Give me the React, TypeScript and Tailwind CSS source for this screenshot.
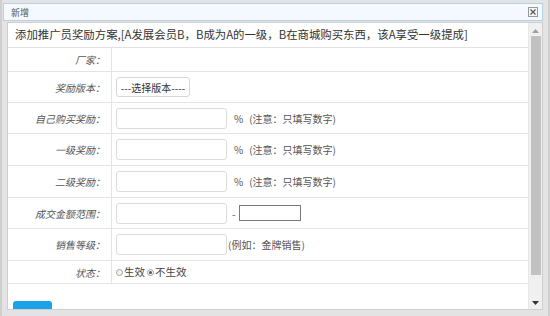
import React from 'react';

// Form rows for the "新增" dialog.
const rows: { label: string; kind: string; h: string }[] = [
  { label: '厂家：', kind: 'empty', h: 'h-[24px]' },
  { label: '奖励版本：', kind: 'select', h: 'h-[31px]' },
  { label: '自己购买奖励：', kind: 'percent', h: 'h-[31px]' },
  { label: '一级奖励：', kind: 'percent', h: 'h-[32px]' },
  { label: '二级奖励：', kind: 'percent', h: 'h-[32px]' },
  { label: '成交金额范围：', kind: 'range', h: 'h-[31px]' },
  { label: '销售等级：', kind: 'level', h: 'h-[32px]' },
  { label: '状态：', kind: 'status', h: 'h-[23px]' },
];

const TextBox = () => (
  <div className="w-[111px] h-[21px] rounded-[3px] border border-[#dcdcdc] bg-white" />
);

const Radio = ({ checked }: { checked?: boolean }) => (
  <span className="inline-flex items-center justify-center w-[7px] h-[7px] rounded-full border border-[#a0a0a0] bg-[#f4f4f4] mr-[1px]">
    {checked && <span className="w-[3px] h-[3px] rounded-full bg-[#555]" />}
  </span>
);

const Cell = ({ kind }: { kind: string }) => {
  if (kind === 'select')
    return (
      <div className="w-[74px] h-[20px] rounded-[3px] border border-[#d6d6d6] bg-white flex items-center justify-center text-[10px] text-[#333]">
        ---选择版本----
      </div>
    );
  if (kind === 'percent')
    return (
      <div className="flex items-center text-[10px] text-[#555]">
        <TextBox />
        <span className="ml-[7px]">%</span>
        <span className="ml-[6px]">(注意：只填写数字)</span>
      </div>
    );
  if (kind === 'range')
    return (
      <div className="flex items-center text-[10px] text-[#555]">
        <TextBox />
        <span className="ml-[5px]">-</span>
        <div className="ml-[4px] w-[62px] h-[16px] border border-[#7a7a7a] bg-white" />
      </div>
    );
  if (kind === 'level')
    return (
      <div className="flex items-center text-[10px] text-[#555]">
        <TextBox />
        <span className="ml-[1px]">(例如：金牌销售)</span>
      </div>
    );
  if (kind === 'status')
    return (
      <div className="flex items-center text-[10.5px] text-[#444]">
        <Radio />
        <span>生效</span>
        <span className="ml-[2px]" />
        <Radio checked />
        <span>不生效</span>
      </div>
    );
  return null;
};

export default function App() {
  return (
    <div
      className="w-[550px] h-[316px] bg-[#e3e3e3] border-l-[2px] border-r-[2px] border-[#cfcfcf] pt-[3px] pl-[1px] pr-[5px] flex flex-col overflow-hidden"
      style={{ fontFamily: '"Noto Sans CJK SC", "Microsoft YaHei", sans-serif' }}
    >
      {/* title bar */}
      <div className="h-[18px] border border-[#b4d0ea] bg-[#f5f9fd] flex items-center justify-between pl-[7px] pr-[4px]">
        <span className="text-[9px] text-[#555] leading-none">新增</span>
        <div className="w-[10px] h-[10px] border border-[#9a9a9a] bg-[#f4f4f4] flex items-center justify-center">
          <svg width="6" height="6" viewBox="0 0 6 6">
            <path d="M0.5 0.5 L5.5 5.5 M5.5 0.5 L0.5 5.5" stroke="#555" strokeWidth="1.1" />
          </svg>
        </div>
      </div>

      {/* content panel */}
      <div className="ml-[4px] mt-[1px] h-[288px] border border-[#cfcfcf] bg-white flex overflow-hidden">
        <div className="flex-1 flex flex-col overflow-hidden">
          <div className="h-[25px] shrink-0 border-b border-[#e2e2e2] flex items-center pl-[7px] text-[11.4px] text-[#333] whitespace-nowrap">
            添加推广员奖励方案,[A发展会员B，B成为A的一级，B在商城购买东西，该A享受一级提成]
          </div>
          {rows.map((r) => (
            <div key={r.label} className={`${r.h} shrink-0 flex border-b border-[#e4e4e4]`}>
              <div className="w-[104px] shrink-0 border-r border-[#e4e4e4] flex items-center justify-end pr-[6px] text-[10px] italic text-[#555]">
                {r.label}
              </div>
              <div className="flex-1 flex items-center pl-[4px]">
                <Cell kind={r.kind} />
              </div>
            </div>
          ))}
          <div className="flex-1 pl-[5px] pt-[17px]">
            <div className="w-[39px] h-[20px] rounded-[3px] bg-[#1aa3e8]" />
          </div>
        </div>

        {/* scrollbar */}
        <div className="w-[14px] shrink-0 bg-[#f0f0f0] border-l border-[#e8e8e8] flex flex-col items-center pt-[6px] pb-[4px]">
          <svg width="7" height="4" viewBox="0 0 7 4">
            <path d="M0 4 L3.5 0 L7 4 Z" fill="#a0a0a0" />
          </svg>
          <div className="w-[10px] mt-[3px] h-[239px] bg-[#c1c1c1]" />
          <div className="flex-1" />
          <svg width="7" height="4" viewBox="0 0 7 4">
            <path d="M0 0 L3.5 4 L7 0 Z" fill="#333" />
          </svg>
        </div>
      </div>
    </div>
  );
}
